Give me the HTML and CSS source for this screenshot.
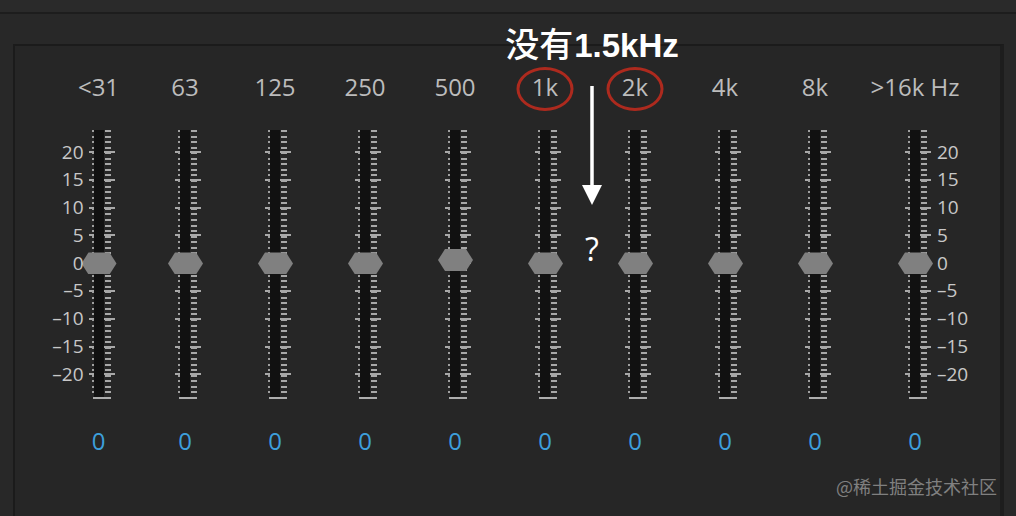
FILE: index.html
```html
<!DOCTYPE html>
<html lang="zh">
<head>
<meta charset="utf-8">
<title>Graphic Equalizer</title>
<link rel="stylesheet" href="styles.css">
</head>
<body>
  <div class="topbar"></div>
  <div class="frame">
    <section class="eq-panel">
      <div class="bands">
        <div class="band">
          <div class="freq">&lt;31</div>
          <div class="fader-row">
            <div class="scale scale-left">
              <span>20</span><span>15</span><span>10</span><span>5</span><span>0</span><span>–5</span><span>–10</span><span>–15</span><span>–20</span>
            </div>
            <div class="fader" style="--db:0"><div class="ticks"></div><div class="thumb"></div></div>
            <div class="spacer-first"></div>
          </div>
          <div class="value">0</div>
        </div>
        <div class="band">
          <div class="freq">63</div>
          <div class="fader-row"><div class="fader" style="--db:0"><div class="ticks"></div><div class="thumb"></div></div></div>
          <div class="value">0</div>
        </div>
        <div class="band">
          <div class="freq">125</div>
          <div class="fader-row"><div class="fader" style="--db:0"><div class="ticks"></div><div class="thumb"></div></div></div>
          <div class="value">0</div>
        </div>
        <div class="band">
          <div class="freq">250</div>
          <div class="fader-row"><div class="fader" style="--db:0"><div class="ticks"></div><div class="thumb"></div></div></div>
          <div class="value">0</div>
        </div>
        <div class="band">
          <div class="freq">500</div>
          <div class="fader-row"><div class="fader" style="--db:0.6"><div class="ticks"></div><div class="thumb"></div></div></div>
          <div class="value">0</div>
        </div>
        <div class="band">
          <div class="freq circled">1k</div>
          <div class="fader-row"><div class="fader" style="--db:0"><div class="ticks"></div><div class="thumb"></div></div></div>
          <div class="value">0</div>
        </div>
        <div class="band">
          <div class="freq circled">2k</div>
          <div class="fader-row"><div class="fader" style="--db:0"><div class="ticks"></div><div class="thumb"></div></div></div>
          <div class="value">0</div>
        </div>
        <div class="band">
          <div class="freq">4k</div>
          <div class="fader-row"><div class="fader" style="--db:0"><div class="ticks"></div><div class="thumb"></div></div></div>
          <div class="value">0</div>
        </div>
        <div class="band">
          <div class="freq">8k</div>
          <div class="fader-row"><div class="fader" style="--db:0"><div class="ticks"></div><div class="thumb"></div></div></div>
          <div class="value">0</div>
        </div>
        <div class="band">
          <div class="freq">&gt;16k Hz</div>
          <div class="fader-row">
            <div class="spacer-last"></div>
            <div class="fader" style="--db:0"><div class="ticks"></div><div class="thumb"></div></div>
            <div class="scale scale-right">
              <span>20</span><span>15</span><span>10</span><span>5</span><span>0</span><span>–5</span><span>–10</span><span>–15</span><span>–20</span>
            </div>
          </div>
          <div class="value">0</div>
        </div>
      </div>
    </section>
  </div>

  <div class="note-title"><span class="cjk">没有</span>1.5kHz</div>
  <svg class="note-arrow" width="22" height="122" viewBox="0 0 22 122">
    <line x1="11" y1="0" x2="11" y2="102" stroke="#ffffff" stroke-width="3.5"/>
    <polygon points="1,99 21,99 11,119" fill="#ffffff"/>
  </svg>
  <div class="note-question">?</div>
  <div class="watermark">@稀土掘金技术社区</div>
</body>
</html>
```
FILE: styles.css
```css
html, body {
  margin: 0;
  padding: 0;
}

body {
  position: relative;
  width: 1016px;
  height: 516px;
  overflow: hidden;
  background: #282828;
  font-family: "Open Sans", "Noto Sans", sans-serif;
}

.topbar {
  height: 12px;
  background: #2a2a2a;
  border-bottom: 2px solid #1d1d1d;
}

.frame {
  padding: 30px 12px 0 13px;
}

.eq-panel {
  position: relative;
  height: 480px;
  background: #262626;
  border-top: 2px solid #1b1b1b;
  border-left: 2px solid #1b1b1b;
  border-right: 4px solid #1d1d1d;
  padding: 26px 0 0 42px;
  box-sizing: border-box;
}

.bands {
  display: grid;
  grid-template-columns: 83px repeat(8, 90px) 110px;
}

.band {
  display: flex;
  flex-direction: column;
  align-items: center;
}

.freq {
  position: relative;
  height: 30px;
  line-height: 30px;
  font-size: 24px;
  font-weight: 500;
  color: #bcbcbc;
  white-space: nowrap;
}

.circled::after {
  content: "";
  position: absolute;
  left: 50%;
  top: 50%;
  width: 51px;
  height: 38px;
  border: 3px solid #ad2a1e;
  border-radius: 50%;
  transform: translate(-50%, calc(-50% + 2px));
}

.fader-row {
  display: flex;
  align-items: flex-start;
  margin-top: 28px;
}

.fader {
  position: relative;
  width: 36px;
  height: 269px;
  flex: none;
}

.ticks {
  margin-left: 8px;
  width: 26px;
  height: 269px;
  background:
    linear-gradient(#acacac, #acacac) 4px 267px / 18px 2px no-repeat,
    linear-gradient(#111111, #111111) 5px 0 / 10px 268px no-repeat,
    repeating-linear-gradient(to bottom, #a0a0a0 0 2px, transparent 2px 5.56px) 3px 0 / 2px 266px no-repeat,
    repeating-linear-gradient(to bottom, #a8a8a8 0 2px, transparent 2px 5.56px) 16px 0 / 6px 266px no-repeat,
    repeating-linear-gradient(to bottom, #a8a8a8 0 2px, transparent 2px 27.8px) 0 21.24px / 5px 225px no-repeat,
    repeating-linear-gradient(to bottom, #a8a8a8 0 2px, transparent 2px 27.8px) 15px 21.24px / 11px 225px no-repeat;
}

.thumb {
  position: absolute;
  left: 1px;
  width: 35px;
  height: 22px;
  top: calc((24 - var(--db)) * 5.56px - 11px);
  background: #808080;
  clip-path: polygon(20% 0, 80% 0, 100% 50%, 80% 100%, 20% 100%, 0 50%);
}

.scale {
  display: flex;
  flex-direction: column;
  width: 36px;
  padding-top: 8.5px;
  font-size: 19px;
  font-weight: 500;
  color: #c8c8c8;
  flex: none;
}

.scale span {
  height: 27.8px;
  line-height: 27.8px;
  white-space: nowrap;
}

.scale-left {
  align-items: flex-end;
  margin-right: -3px;
  position: relative;
  z-index: 1;
}

.scale-right {
  align-items: flex-start;
  margin-left: 4px;
}

.spacer-first {
  width: 33px;
  flex: none;
}

.spacer-last {
  width: 40px;
  flex: none;
}

.value {
  margin-top: 27px;
  height: 30px;
  line-height: 30px;
  font-size: 24px;
  font-weight: 500;
  color: #3d9fdb;
}

.note-title {
  position: absolute;
  left: 592px;
  top: 25px;
  transform: translateX(-50%);
  font-family: "Liberation Sans", "Noto Sans CJK SC", sans-serif;
  font-weight: 700;
  font-size: 33px;
  line-height: 36px;
  color: #ffffff;
  white-space: nowrap;
}

.note-title .cjk {
  font-family: "Noto Sans CJK SC", sans-serif;
  font-weight: 500;
  font-size: 34px;
  line-height: 36px;
  margin-right: 1px;
}

.note-arrow {
  position: absolute;
  left: 581px;
  top: 86px;
}

.note-question {
  position: absolute;
  left: 592px;
  top: 233px;
  transform: translateX(-50%);
  font-size: 32px;
  line-height: 32px;
  color: #ffffff;
}

.watermark {
  position: absolute;
  right: 19px;
  top: 477px;
  font-family: "Noto Sans CJK SC", sans-serif;
  font-size: 18px;
  line-height: 18px;
  color: #808080;
  white-space: nowrap;
}
```
